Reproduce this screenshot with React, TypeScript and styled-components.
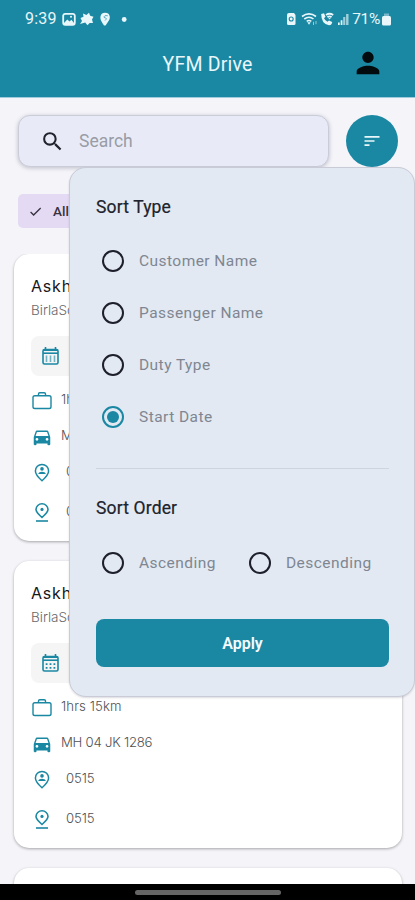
import React from "react";
import styled, { createGlobalStyle } from "styled-components";
import {
  MdPerson,
  MdSearch,
  MdSort,
  MdCheck,
  MdDirectionsCar,
} from "react-icons/md";

const teal = "#1b88a3";

const GlobalStyle = createGlobalStyle`
  * { box-sizing: border-box; }
  body { margin: 0; background: #f4f4f9; font-family: Roboto, sans-serif; }
  svg { display: block; flex: none; }
`;

const Screen = styled.div`
  position: relative;
  width: 415px;
  height: 900px;
  overflow: hidden;
  display: flex;
  flex-direction: column;
  background: #f4f4f9;
`;

const Header = styled.header`
  height: 98px;
  flex: none;
  background: ${teal};
  border-bottom: 1px solid #9fcbdc;
  color: #e9f7fb;
`;

const StatusBar = styled.div`
  height: 37px;
  padding: 0 24px 0 25px;
  display: flex;
  align-items: center;
  justify-content: space-between;
  font-size: 16px;
`;

const StatusGroup = styled.div<{ $gap: number }>`
  display: flex;
  align-items: center;
  gap: ${(p) => p.$gap}px;
`;

const Clock = styled.span`
  letter-spacing: 0.2px;
  margin-right: 2px;
`;

const Percent = styled.span`
  margin-right: 2px;
  font-size: 15.5px;
  letter-spacing: -0.3px;
`;

const TitleBar = styled.div`
  height: 54px;
  padding: 0 32px;
  display: grid;
  grid-template-columns: 30px 1fr 30px;
  align-items: center;
`;

const Title = styled.h1`
  margin: 0;
  grid-column: 2;
  text-align: center;
  font-size: 19.5px;
  font-weight: 400;
  letter-spacing: 0.2px;
`;

const Account = styled.div`
  margin: -2px 0 0 -2px;
  color: #020b0e;
`;

const SearchRow = styled.div`
  display: flex;
  flex: none;
  gap: 17px;
  padding: 17px 17px 0 18px;
`;

const SearchField = styled.div`
  width: 311px;
  height: 52px;
  display: flex;
  align-items: center;
  gap: 14px;
  padding-left: 21px;
  border: 1px solid #cacdd8;
  border-radius: 12px;
  background: #e8ebf7;
  box-shadow: 0 1px 4px rgba(50, 50, 80, 0.28);
  color: #20232b;
`;

const Placeholder = styled.span`
  color: #999ca6;
  font-size: 17.5px;
`;

const SortButton = styled.div`
  width: 52px;
  height: 52px;
  border-radius: 50%;
  display: flex;
  align-items: center;
  justify-content: center;
  background: ${teal};
  color: #e8f7fb;
`;

const Chip = styled.div`
  flex: none;
  width: 110px;
  height: 34px;
  margin: 27px 0 26px 18px;
  padding-left: 10px;
  display: flex;
  align-items: center;
  gap: 10px;
  border-radius: 5px;
  background: #e5daf4;
  color: #38333f;
  font-size: 13.5px;
  font-weight: 500;
`;

const Cards = styled.main`
  flex: 1;
  overflow: hidden;
  padding: 0 14px;
  display: flex;
  flex-direction: column;
  gap: 20px;
`;

const Card = styled.article`
  width: 388px;
  height: 287px;
  flex: none;
  padding: 22px 17px 0;
  border-radius: 15px;
  background: #fff;
  box-shadow: 0 1px 3px rgba(0, 0, 0, 0.32);
  font-family: Inter, sans-serif;
`;

const Name = styled.div`
  height: 20px;
  line-height: 20px;
  color: #17171a;
  font-size: 16px;
  letter-spacing: 0.8px;
`;

const Company = styled.div`
  height: 20px;
  line-height: 20px;
  margin-top: 4px;
  color: #66676a;
  font-size: 13.5px;
  font-weight: 300;
`;

const DateBox = styled.div`
  height: 40px;
  width: 120px;
  margin: 16px 0 7px;
  padding-left: 10px;
  display: flex;
  align-items: center;
  border-radius: 8px;
  background: #f5f5f5;
  color: ${teal};
`;

const Detail = styled.div<{ $h: number; $gap: number }>`
  height: ${(p) => p.$h}px;
  display: flex;
  align-items: center;
  gap: ${(p) => p.$gap}px;
  color: ${teal};
`;

const DetailText = styled.span<{ $ls: number }>`
  padding-bottom: 4px;
  color: #505155;
  font-size: 13.2px;
  font-weight: 300;
  letter-spacing: ${(p) => p.$ls}px;
`;

const NavBar = styled.footer`
  height: 16px;
  flex: none;
  display: flex;
  justify-content: center;
  padding-top: 6px;
  background: #000;
`;

const Handle = styled.div`
  width: 146px;
  height: 5px;
  border-radius: 3px;
  background: #656565;
`;

const Menu = styled.section`
  position: absolute;
  left: 69px;
  top: 167px;
  width: 346px;
  height: 530px;
  padding: 27px 25px 0 26px;
  border: 1px solid #c9ccd6;
  border-radius: 17px;
  background: #e2e9f3;
  box-shadow: 0 1px 2px rgba(40, 40, 70, 0.16);
`;

const MenuTitle = styled.h2`
  height: 24px;
  line-height: 24px;
  margin: 0;
  color: #20232b;
  font-size: 17.5px;
  font-weight: 400;
  letter-spacing: 0.15px;
  -webkit-text-stroke: 0.2px currentColor;
`;

const Options = styled.div`
  padding-top: 16px;
`;

const Option = styled.label<{ $w?: number }>`
  height: 52px;
  width: ${(p) => (p.$w ? `${p.$w}px` : "auto")};
  padding-left: 6px;
  display: flex;
  align-items: center;
  gap: 15px;
  color: #7f8691;
  font-size: 15.5px;
  letter-spacing: 0.45px;
  white-space: nowrap;
`;

const Radio = styled.span<{ $on?: boolean }>`
  width: 22px;
  height: 22px;
  flex: none;
  display: flex;
  align-items: center;
  justify-content: center;
  border: 2px solid ${(p) => (p.$on ? teal : "#1d1f2a")};
  border-radius: 50%;

  &::after {
    content: "";
    width: 12px;
    height: 12px;
    border-radius: 50%;
    background: ${(p) => (p.$on ? teal : "transparent")};
  }
`;

const Divider = styled.div`
  height: 1px;
  margin: 25px 0 27px;
  background: #cfd5dd;
`;

const OrderRow = styled.div`
  display: flex;
  padding-top: 17px;
`;

const ApplyButton = styled.button`
  width: 293px;
  height: 48px;
  margin: 30px 0 0;
  border: 0;
  border-radius: 8px;
  background: ${teal};
  color: #f4fcff;
  font: 600 16px Roboto, sans-serif;
`;

const CalendarIcon = ({ bars }: { bars?: boolean }) => (
  <svg width="19" height="20" viewBox="0 0 19 20" fill="none" stroke="currentColor">
    <rect x="2" y="3.5" width="15" height="14.5" rx="1.5" strokeWidth="1.6" />
    <path d="M2 4.3H17M4.5 1V4M14.5 1V4" strokeWidth="1.6" />
    <path d="M2 7.2H17" strokeWidth="1.6" />
    {bars ? (
      <path d="M5.5 9.5V16M9.5 9.5V16M13.5 9.5V16" strokeWidth="1.6" opacity="0.6" />
    ) : (
      <path d="M4.7 11.2H6.5M8.6 11.2H10.4M12.5 11.2H14.3M4.7 14.8H6.5M8.6 14.8H10.4M12.5 14.8H14.3" strokeWidth="1.8" />
    )}
  </svg>
);

const CaseIcon = () => (
  <svg width="22" height="20" viewBox="0 0 22 20" fill="none" stroke="currentColor" strokeWidth="1.4">
    <rect x="2" y="4.8" width="18" height="12.7" rx="1.8" />
    <path d="M7.5 5V3Q7.5 1.7 8.8 1.7H13.2Q14.5 1.7 14.5 3V5" />
  </svg>
);

const PersonPinIcon = () => (
  <svg width="22" height="20" viewBox="0 0 22 20" fill="none" stroke="currentColor" strokeWidth="1.5">
    <path d="M11 17.8C7 14.2 4.4 11.4 4.4 8A6.6 6.6 0 0 1 17.6 8C17.6 11.4 15 14.2 11 17.8Z" />
    <circle cx="11" cy="5.9" r="1.8" fill="currentColor" stroke="none" />
    <path d="M7.2 10.9C7.8 8 14.2 8 14.8 10.9Z" fill="currentColor" stroke="none" />
  </svg>
);

const PinIcon = () => (
  <svg width="22" height="20" viewBox="0 0 22 20" fill="none" stroke="currentColor" strokeWidth="1.6">
    <path d="M11 14.5C7.5 11.5 5 9.2 5 6.6A6 5.8 0 0 1 17 6.6C17 9.2 14.5 11.5 11 14.5Z" />
    <circle cx="11" cy="6.4" r="1.6" fill="currentColor" stroke="none" />
    <path d="M5 18H17" strokeWidth="1.6" />
  </svg>
);

const NotificationIcons = () => (
  <svg width="83" height="16" viewBox="-17 0 83 16" fill="currentColor">
    <rect x="-15.8" y="2.8" width="11.6" height="11" rx="2" fill="none" stroke="currentColor" strokeWidth="1.8" />
    <path d="M-15 12L-11.7 8.4L-9.5 10.6L-7.6 8.8L-5 12V13.5H-15Z" />
    <circle cx="-8" cy="5.8" r="1" />
    <path d="M1.5 7L4.5 5.8L4 2.5L7.4 4L10 1.8L11.2 4.8L14.5 5.8L13 8.5L14 12L10.6 12L8.5 14.3L6.2 11.5L1 13L3 10Z" />
    <path d="M21.5 5.2A4.7 4.2 0 0 1 30.7 5.2C31.3 9 29 10.5 26.5 14.5H25C23 11 20.9 9 21.5 5.2Z" />
    <path d="M28.8 4.8Q24.8 4 25.2 6.5Q28.8 7 26 9.5" fill="none" stroke={teal} strokeWidth=".7" />
    <circle cx="45.2" cy="8.5" r="2.4" />
  </svg>
);

const SystemIcons = () => (
  <svg width="66" height="16" viewBox="0 0 66 16" fill="currentColor">
    <path d="M3 2H8L9.5 4V12.5Q9.5 14 8 14H2.5Q1 14 1 12.5V4Q1 2 3 2Z" />
    <circle cx="5.2" cy="8" r="2" fill="none" stroke={teal} strokeWidth="1.1" />
    <path d="M16 5.5Q23 .2 30 5.5M18.3 8Q23 4.4 27.5 8M20.7 10.4Q23 8.6 25.3 10.4" fill="none" stroke="currentColor" strokeWidth="1.6" />
    <path d="M21.3 11.2H24.7L23 13.7Z" />
    <path d="M27.5 14V10.8M30 10V13.2" stroke="currentColor" strokeWidth="1" opacity=".6" />
    <path d="M35.2 3L38 2.3L39.5 5.7L38 7.2Q39.2 9.6 41.4 10.8L43 9.4L46.2 11.1Q46 14.3 43 14.2Q35.2 13 35.2 3Z" />
    <path d="M40 4Q43.5 1.5 47.2 4M41.5 6.2Q43.5 4.6 45.5 6.2" fill="none" stroke="currentColor" strokeWidth="1.8" />
    <path d="M42.3 7H44.8L43.5 8.6Z" />
    <path d="M52 11.5H53.7V14H52ZM54.7 9.3H56.4V14H54.7Z" />
    <path d="M57.2 6H59.3V14H57.2ZM60.1 3H62.5V14H60.1Z" opacity=".65" />
  </svg>
);

const BatteryIcon = () => (
  <svg width="9" height="14" viewBox="0 0 9 14" fill="currentColor">
    <path d="M2 1.5H7V5H2Z" opacity=".45" />
    <rect y="4" width="9" height="9.5" rx="1.5" />
  </svg>
);

const TripCard = ({ bars }: { bars?: boolean }) => (
  <Card>
    <Name>Askh</Name>
    <Company>BirlaSo</Company>
    <DateBox><CalendarIcon bars={bars} /></DateBox>
    <Detail $h={36} $gap={8}><CaseIcon /><DetailText $ls={0.1}>1hrs 15km</DetailText></Detail>
    <Detail $h={36} $gap={8}><MdDirectionsCar size={22} /><DetailText $ls={-0.25}>MH 04 JK 1286</DetailText></Detail>
    <Detail $h={35} $gap={13}><PersonPinIcon /><DetailText $ls={-0.1}>0515</DetailText></Detail>
    <Detail $h={45} $gap={13}><PinIcon /><DetailText $ls={-0.1}>0515</DetailText></Detail>
  </Card>
);

const sortTypes = ["Customer Name", "Passenger Name", "Duty Type", "Start Date"];

export default function App() {
  return (
    <Screen>
      <GlobalStyle />
      <Header>
        <StatusBar>
          <StatusGroup $gap={3}>
            <Clock>9:39</Clock>
            <NotificationIcons />
          </StatusGroup>
          <StatusGroup $gap={0}>
            <SystemIcons />
            <Percent>71%</Percent>
            <BatteryIcon />
          </StatusGroup>
        </StatusBar>
        <TitleBar>
          <Title>YFM Drive</Title>
          <Account><MdPerson size={34} /></Account>
        </TitleBar>
      </Header>
      <SearchRow>
        <SearchField>
          <MdSearch size={25} />
          <Placeholder>Search</Placeholder>
        </SearchField>
        <SortButton><MdSort size={20} /></SortButton>
      </SearchRow>
      <Chip><MdCheck size={15} />All-</Chip>
      <Cards>
        <TripCard bars />
        <TripCard />
        <Card />
      </Cards>
      <NavBar><Handle /></NavBar>
      <Menu>
        <MenuTitle>Sort Type</MenuTitle>
        <Options>
          {sortTypes.map((label) => (
            <Option key={label}>
              <Radio $on={label === "Start Date"} />
              {label}
            </Option>
          ))}
        </Options>
        <Divider />
        <MenuTitle>Sort Order</MenuTitle>
        <OrderRow>
          <Option $w={147}><Radio />Ascending</Option>
          <Option><Radio />Descending</Option>
        </OrderRow>
        <ApplyButton>Apply</ApplyButton>
      </Menu>
    </Screen>
  );
}
